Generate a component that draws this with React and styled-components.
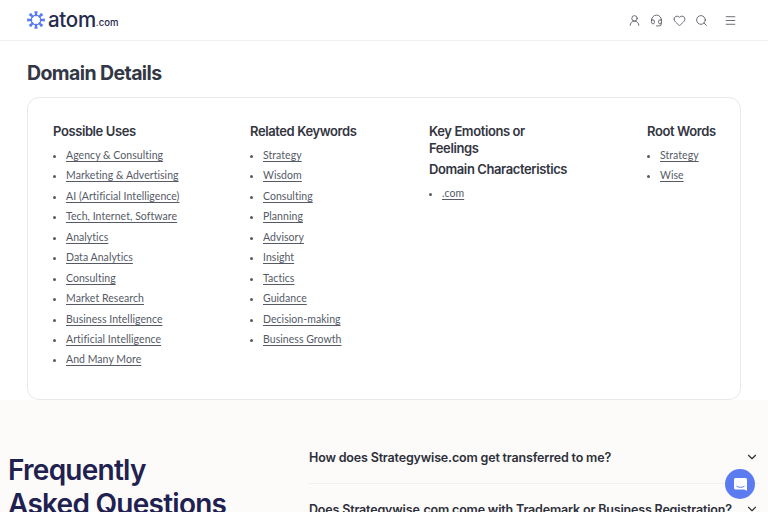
import React from 'react'
import styled, { createGlobalStyle } from 'styled-components'
import { ChevronDown, Menu, Search, Heart, Headset, UserRound } from 'lucide-react'

const GlobalStyle = createGlobalStyle`
  html, body {
    margin: 0;
    padding: 0;
    background: #ffffff;
  }
  body {
    font-family: 'Inter', 'Liberation Sans', sans-serif;
    color: #2f3342;
  }
`

const Page = styled.div`
  width: 768px;
  height: 512px;
  overflow: hidden;
  position: relative;
`

const Header = styled.header`
  display: flex;
  align-items: center;
  justify-content: space-between;
  height: 40px;
  padding: 0 31px 0 27px;
  border-bottom: 1px solid #f0f0f0;
`

const Logo = styled.div`
  display: flex;
  align-items: center;
  gap: 3px;
  color: #262a4f;
`

const LogoName = styled.span`
  font-size: 20.5px;
  font-weight: 500;
  letter-spacing: -0.3px;
  line-height: 20px;
`

const LogoTld = styled.span`
  font-size: 9.5px;
  font-weight: 500;
  margin: 5px 0 0 -3px;
`

const Nav = styled.nav`
  display: flex;
  align-items: center;
  gap: 9.5px;
  color: #4b4e57;
`

const MenuButton = styled.span`
  display: flex;
  margin-left: 6.5px;
`

const Main = styled.main`
  padding: 20px 27px 0 26px;
`

const Title = styled.h1`
  margin: 0 0 11px 1px;
  font-size: 19.5px;
  line-height: 25px;
  font-weight: 700;
  letter-spacing: -0.6px;
  color: #333745;
`

const Card = styled.section`
  display: grid;
  grid-template-columns: 197px 179px 218px auto;
  box-sizing: border-box;
  height: 303px;
  margin-left: 1px;
  padding: 25px 0 0 25px;
  border: 1px solid #e9e9ec;
  border-radius: 12px;
`

const Heading = styled.h3`
  margin: 0 0 4px;
  font-size: 13px;
  line-height: 17px;
  font-weight: 600;
  letter-spacing: -0.4px;
  color: #33353f;
`

const List = styled.ul`
  margin: 0;
  padding: 1px 0 0 13px;
  font-family: 'Lato', 'Liberation Sans', sans-serif;
  font-size: 10.5px;
  letter-spacing: 0.05px;
  color: #555a66;
`

const Item = styled.li`
  height: 20.45px;
  line-height: 20px;
`

const ItemLink = styled.a`
  color: inherit;
  text-decoration: underline;
  text-underline-offset: 2px;
`

const Faq = styled.section`
  display: grid;
  grid-template-columns: 301px 1fr;
  height: 200px;
  padding: 53px 9px 0 8px;
  background: #fcfbf9;
`

const FaqTitle = styled.h2`
  margin: 0;
  font-size: 28px;
  line-height: 34px;
  font-weight: 600;
  letter-spacing: -0.75px;
  color: #1f2150;
`

const QuestionList = styled.div`
  margin-top: -21.5px;
`

const Question = styled.div`
  display: flex;
  align-items: center;
  justify-content: space-between;
  height: 51px;
  border-bottom: 1px solid #f1f0ee;
  font-size: 12.5px;
  font-weight: 600;
  letter-spacing: -0.17px;
  white-space: nowrap;
  color: #2d2f3a;
`

const ChatBubble = styled.div`
  position: absolute;
  left: 725px;
  top: 469px;
  width: 30px;
  height: 30px;
  display: flex;
  align-items: center;
  justify-content: center;
  border-radius: 50%;
  background: #5b7cf0;
`

const uses = ['Agency & Consulting', 'Marketing & Advertising', 'AI (Artificial Intelligence)', 'Tech, Internet, Software', 'Analytics', 'Data Analytics', 'Consulting', 'Market Research', 'Business Intelligence', 'Artificial Intelligence', 'And Many More']
const keywords = ['Strategy', 'Wisdom', 'Consulting', 'Planning', 'Advisory', 'Insight', 'Tactics', 'Guidance', 'Decision-making', 'Business Growth']
const roots = ['Strategy', 'Wise']
const rays = [0, 45, 90, 135, 180, 225, 270, 315]

function LinkList({ items }) {
  return (
    <List>
      {items.map((item) => (
        <Item key={item}><ItemLink href="#">{item}</ItemLink></Item>
      ))}
    </List>
  )
}

function AtomMark() {
  return (
    <svg width="18" height="18" viewBox="0 0 18 18">
      {rays.map((angle) => (
        <path key={angle} d="M7.4 0.2h3.2L9.9 5.2H8.1z" fill="#5b7cf0" transform={`rotate(${angle} 9 9)`} />
      ))}
      <circle cx="9" cy="9" r="4.8" fill="none" stroke="#5b7cf0" strokeWidth="1.2" />
    </svg>
  )
}

function ChatIcon() {
  return (
    <svg width="15" height="15" viewBox="0 0 15 15">
      <path d="M2.5 1h10A1.5 1.5 0 0 1 14 2.5v11.3l-3-1.3H2.5A1.5 1.5 0 0 1 1 11V2.5A1.5 1.5 0 0 1 2.5 1z" fill="#fff" />
      <path d="M3.5 9.2c2.4 1.5 5.6 1.5 8 0" fill="none" stroke="#5b7cf0" strokeWidth="1" />
    </svg>
  )
}

export default function App() {
  return (
    <Page>
      <GlobalStyle />
      <Header>
        <Logo>
          <AtomMark />
          <LogoName>atom</LogoName>
          <LogoTld>.com</LogoTld>
        </Logo>
        <Nav>
          <UserRound size={13} strokeWidth={1.5} />
          <Headset size={13} strokeWidth={1.5} />
          <Heart size={13} strokeWidth={1.5} />
          <Search size={13} strokeWidth={1.5} />
          <MenuButton><Menu size={13} strokeWidth={1.5} /></MenuButton>
        </Nav>
      </Header>
      <Main>
        <Title>Domain Details</Title>
        <Card>
          <div>
            <Heading>Possible Uses</Heading>
            <LinkList items={uses} />
          </div>
          <div>
            <Heading>Related Keywords</Heading>
            <LinkList items={keywords} />
          </div>
          <div>
            <Heading>Key Emotions or<br />Feelings</Heading>
            <Heading>Domain Characteristics</Heading>
            <LinkList items={['.com']} />
          </div>
          <div>
            <Heading>Root Words</Heading>
            <LinkList items={roots} />
          </div>
        </Card>
      </Main>
      <Faq>
        <FaqTitle>Frequently<br />Asked Questions</FaqTitle>
        <QuestionList>
          <Question>How does Strategywise.com get transferred to me?<ChevronDown size={14} /></Question>
          <Question>Does Strategywise.com come with Trademark or Business Registration?<ChevronDown size={14} /></Question>
        </QuestionList>
      </Faq>
      <ChatBubble><ChatIcon /></ChatBubble>
    </Page>
  )
}
